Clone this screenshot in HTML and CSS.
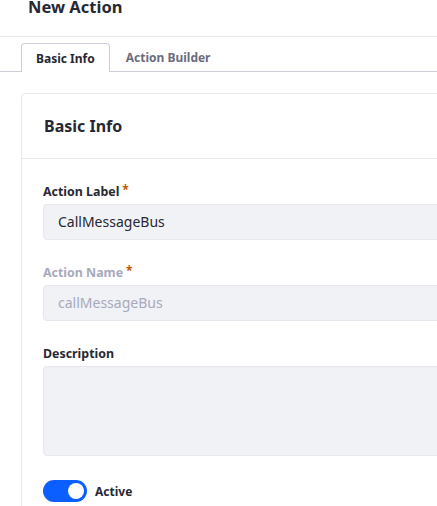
FILE: index.html
```html
<!DOCTYPE html>
<html>
<head>
<meta charset="utf-8">
<link rel="stylesheet" href="styles.css">
</head>
<body>
<div class="page">
  <header class="page-header">
    <h1 class="page-title">New Action</h1>
  </header>
  <nav class="tabs">
    <a class="tab active">Basic Info</a>
    <a class="tab">Action Builder</a>
  </nav>
  <section class="card">
    <div class="card-header">
      <h2 class="card-title">Basic Info</h2>
    </div>
    <div class="card-body">
      <div class="form-group">
        <label class="label">Action Label<span class="req">*</span></label>
        <div class="input">CallMessageBus</div>
      </div>
      <div class="form-group">
        <label class="label disabled">Action Name<span class="req">*</span></label>
        <div class="input disabled">callMessageBus</div>
      </div>
      <div class="form-group">
        <label class="label">Description</label>
        <div class="input textarea"></div>
      </div>
      <div class="toggle-row">
        <span class="toggle"><span class="knob"></span></span>
        <span class="toggle-label">Active</span>
      </div>
    </div>
  </section>
</div>
</body>
</html>
```

FILE: styles.css
```css
html, body {
  margin: 0;
  padding: 0;
  background: #fff;
  overflow: hidden;
}
body {
  font-family: "Noto Sans", "Open Sans", sans-serif;
  color: #272833;
  width: 437px;
  height: 506px;
}
.page-header {
  display: flex;
  align-items: flex-start;
  height: 36px;
  border-bottom: 1px solid #e7e7ed;
  padding-left: 28px;
}
.page-title {
  margin: -2px 0 0 0;
  font-size: 16.5px;
  font-weight: 700;
  line-height: 17px;
}
.tabs {
  display: flex;
  padding: 6px 0 0 21px;
  border-bottom: 1px solid #cdced9;
}
.tab {
  display: block;
  height: 27px;
  line-height: 27px;
  padding: 0 14px;
  font-size: 12px;
  font-weight: 700;
  color: #6b6c7e;
  border: 1px solid transparent;
  border-bottom: 0;
  border-radius: 4px 4px 0 0;
  margin-bottom: -1px;
}
.tab.active {
  color: #272833;
  background: #fff;
  border-color: #cdced9;
  height: 28px;
  line-height: 29px;
}
.tab + .tab {
  padding-left: 15px;
}
.card {
  margin: 21px -30px 0 21px;
  border: 1px solid #e7e7ed;
  border-radius: 4px;
}
.card-header {
  height: 64px;
  border-bottom: 1px solid #e7e7ed;
  display: flex;
  align-items: center;
  padding-left: 22px;
}
.card-title {
  margin: 0;
  font-size: 16px;
  font-weight: 700;
}
.card-body {
  padding: 21px 0 40px 21px;
}
.form-group {
  margin-bottom: 21px;
}
.label {
  display: block;
  height: 20px;
  font-size: 12.4px;
  font-weight: 700;
  line-height: 23px;
  margin-bottom: 4px;
}
.label.disabled {
  color: #a7a9bc;
}
.req {
  color: #c25a00;
  margin-left: 3px;
  font-size: 12px;
  line-height: 0;
  vertical-align: 2px;
}
.input {
  height: 34px;
  line-height: 34px;
  background: #f1f2f5;
  border: 1px solid #e7e7ed;
  border-radius: 4px;
  padding: 0 14px;
  font-size: 14px;
  color: #272833;
}
.input.disabled {
  color: #a7a9bc;
}
.input.textarea {
  height: 88px;
}
.toggle-row {
  display: flex;
  align-items: center;
  gap: 8px;
  margin-top: 24px;
}
.toggle {
  position: relative;
  display: block;
  width: 44px;
  height: 22px;
  border-radius: 11px;
  background: #0b5fff;
}
.knob {
  position: absolute;
  top: 3px;
  right: 3px;
  width: 16px;
  height: 16px;
  border-radius: 50%;
  background: #fff;
}
.toggle-label {
  font-size: 12px;
  font-weight: 700;
}
```
